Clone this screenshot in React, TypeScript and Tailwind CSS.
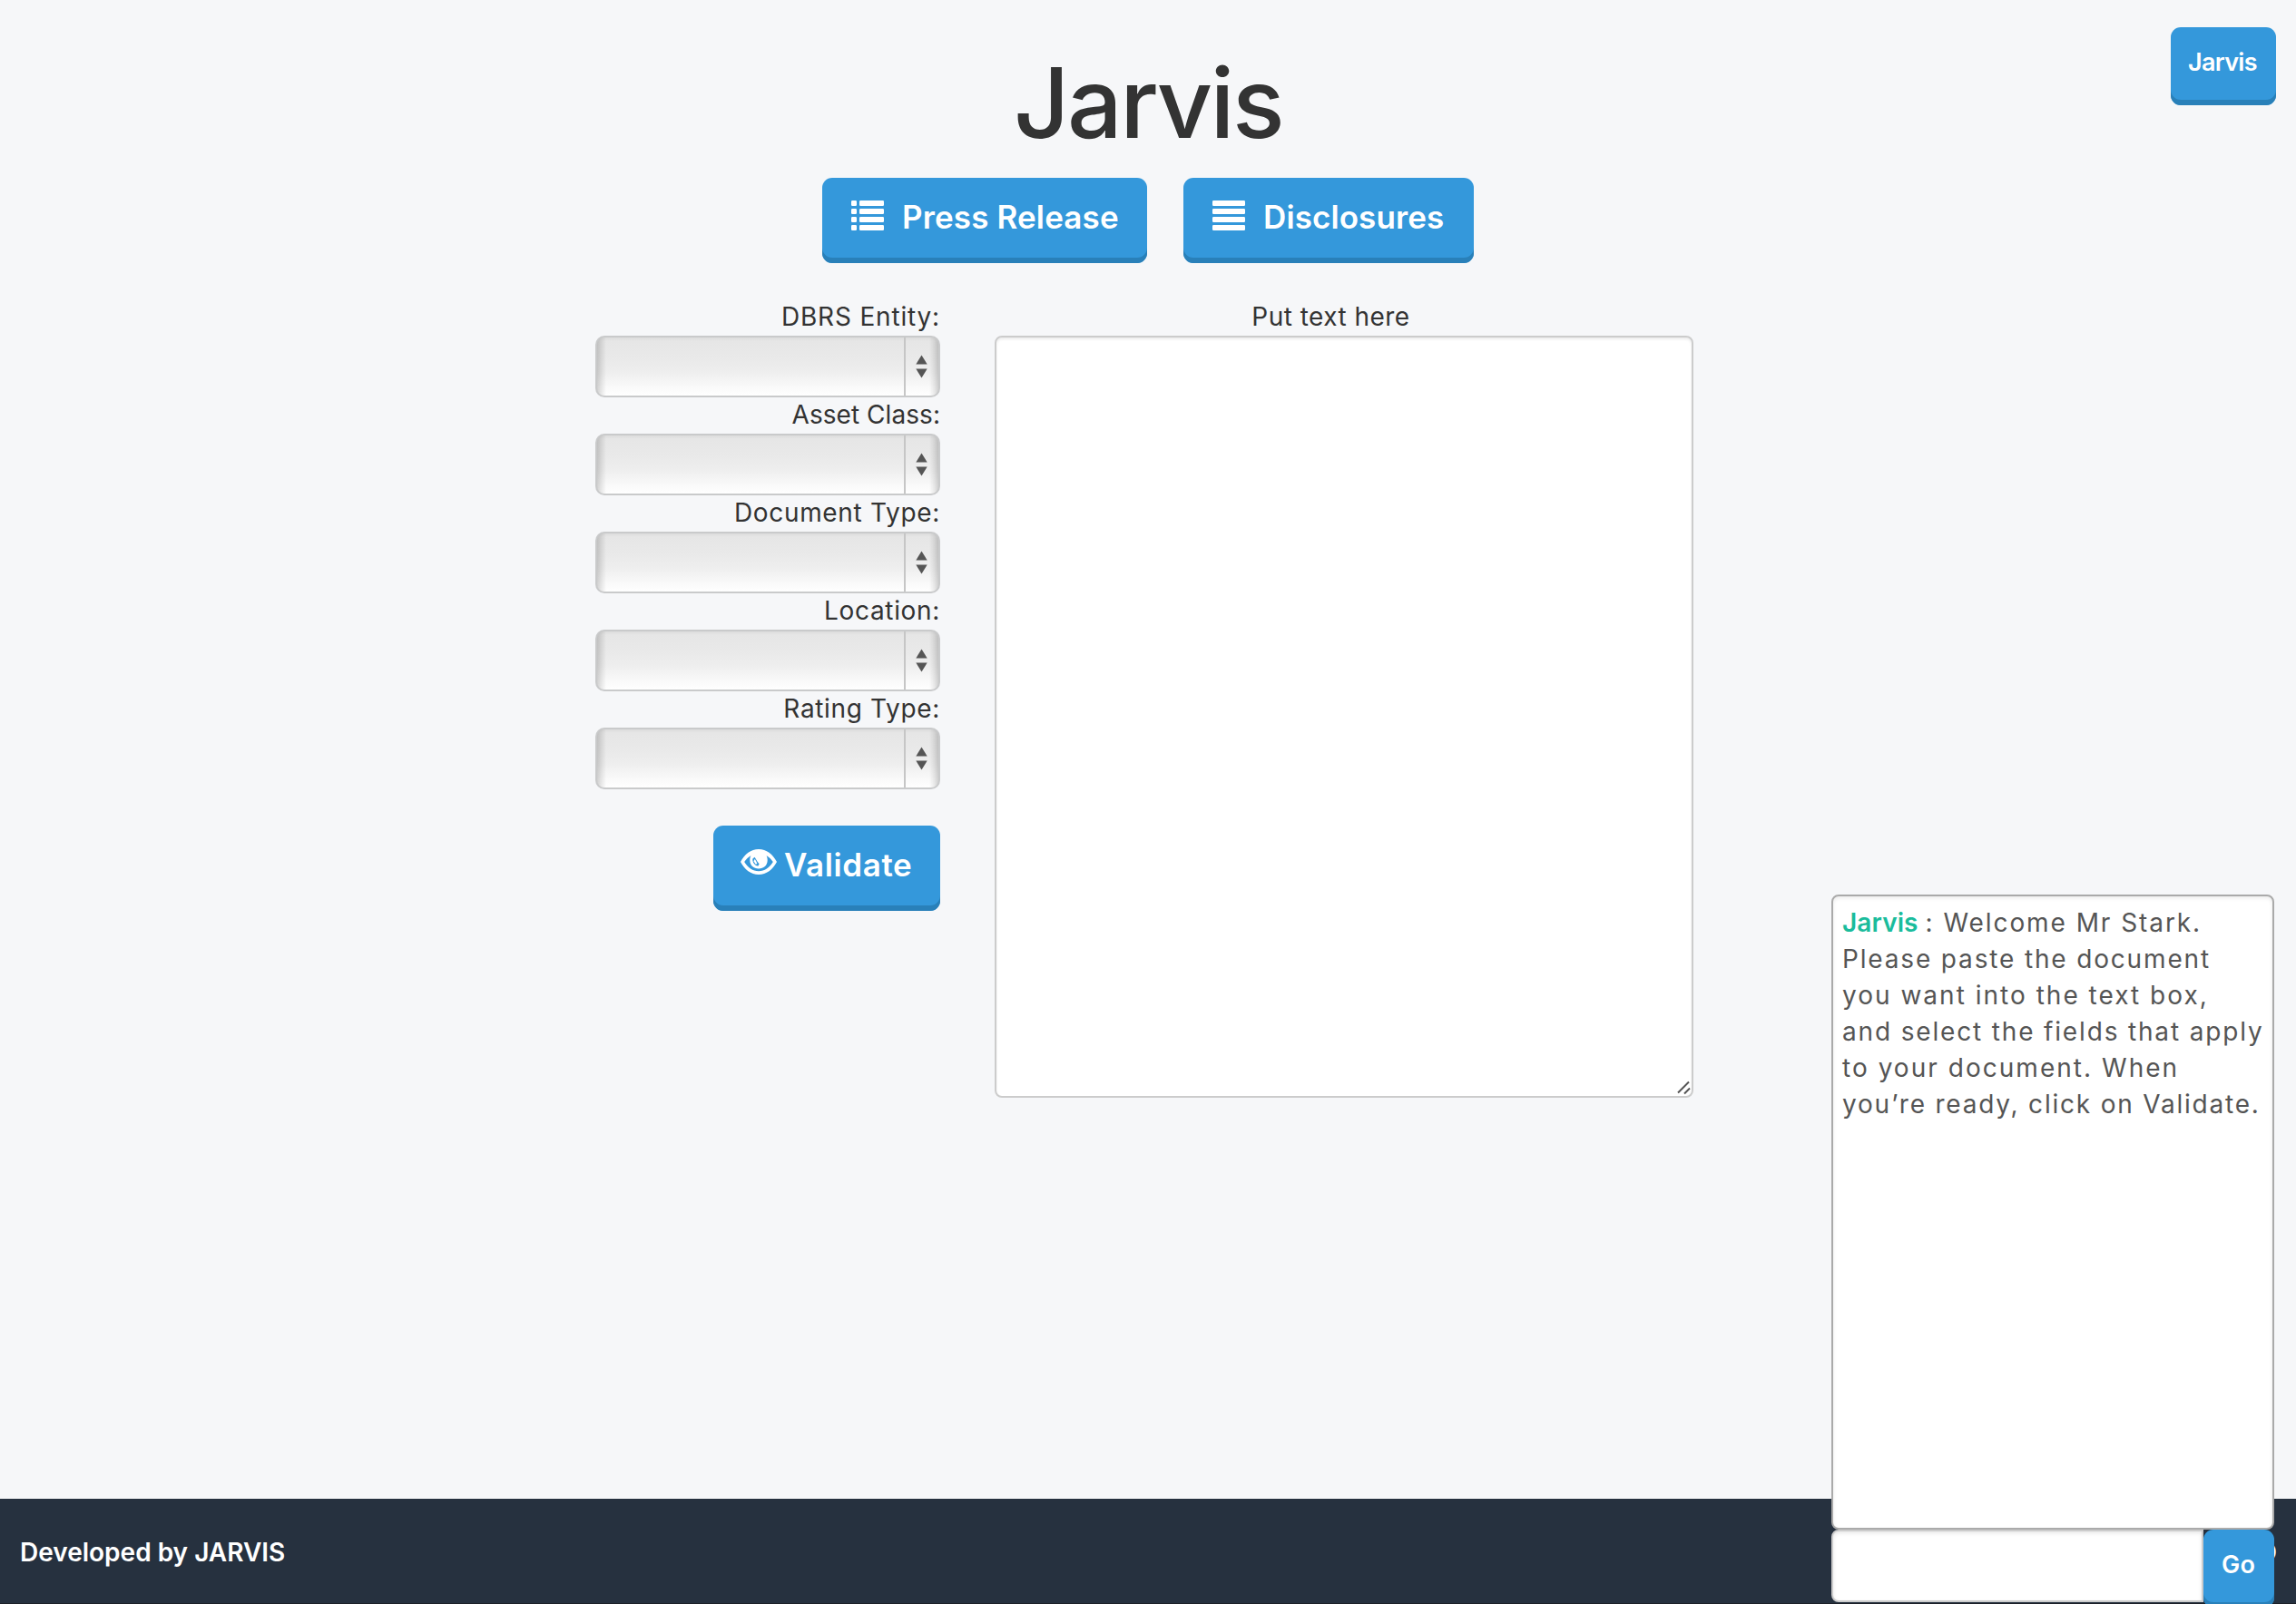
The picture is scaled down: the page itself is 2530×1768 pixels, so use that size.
import type { ReactNode } from 'react';

const blueButton =
  'flex shrink-0 items-start rounded-[11px] bg-[#3498db] font-semibold text-white shadow-[inset_0_-6px_0_#2980b9] whitespace-nowrap';

function LargeButton({ className, children }: { className: string; children: ReactNode }) {
  return (
    <button type="button" className={`${blueButton} h-[94px] text-[35px] leading-[86px] ${className}`}>
      {children}
    </button>
  );
}

function ListIcon() {
  return (
    <svg className="mt-[25px] shrink-0" width="36" height="33" viewBox="0 0 36 33" fill="currentColor">
      {[0, 9, 18, 27].map((y) => (
        <g key={y}>
          <rect x="0" y={y} width="6" height="6" rx="1.3" />
          <rect x="9" y={y} width="27" height="6" rx="1.3" />
        </g>
      ))}
    </svg>
  );
}

function JustifyIcon() {
  return (
    <svg className="mt-[25px] shrink-0" width="36" height="33" viewBox="0 0 36 33" fill="currentColor">
      {[0, 9, 18, 27].map((y) => (
        <rect key={y} x="0" y={y} width="36" height="6" rx="1.3" />
      ))}
    </svg>
  );
}

function EyeIcon() {
  return (
    <svg className="mt-[26px] shrink-0" width="40" height="28" viewBox="0 0 40 28">
      <path
        fill="currentColor"
        fillRule="evenodd"
        d="M20 0C11.500 0 4.500 5.500 0 14C4.500 22.500 11.500 28 20 28C28.500 28 35.500 22.500 40 14C35.500 5.500 28.500 0 20 0ZM11.500 7C10.600 8.700 10.300 10.200 10.300 12C10.300 18 14.500 21.500 20 21.500C25.500 21.500 29.700 18 29.700 12C29.700 10.200 29.400 8.700 28.500 7C31.500 8.800 33.800 11 35.800 14C32 20.500 26.500 24.300 20 24.300C13.500 24.300 8 20.500 4.200 14C6.200 11 8.500 8.800 11.500 7Z"
      />
      <path fill="currentColor" d="M20 2C25.500 2 29 6.500 29 11.500S25 20.500 20 20.500S11 16.500 11 11.500S14.500 2 20 2Z" />
      <path fill="#3498db" d="M15.600 8.800L13.400 10.400C12.800 14.200 15.600 18 19.400 18.600L20.600 16.200L18.600 13.800Z" />
      <path fill="currentColor" d="M15.800 10.800L18.300 15.400L17 17L14.400 13.200Z" />
    </svg>
  );
}

const fields = [
  { label: 'DBRS Entity:', tracking: 'tracking-[0.82px]' },
  { label: 'Asset Class:', tracking: 'tracking-[0.05px]' },
  { label: 'Document Type:', tracking: 'tracking-[0.68px]' },
  { label: 'Location:', tracking: 'tracking-[0.67px]' },
  { label: 'Rating Type:', tracking: 'tracking-[0.66px]' },
];

function SelectField({ label, tracking }: { label: string; tracking: string }) {
  return (
    <div className="flex flex-col">
      <label className={`h-10 text-right text-[28px] leading-[38px] ${tracking}`}>{label}</label>
      <div className="flex h-[68px] justify-end overflow-hidden rounded-[10px] border-2 border-[#c9cacb] bg-[linear-gradient(90deg,#0000002b_0,#00000014_5px,transparent_10px,transparent_366px,#00000012_371px,#0000002b_376px),linear-gradient(180deg,#dcdcdc_0,#e6e6e6_4px,#e9e9e9_22px,#eeeeee_38px,#f9f9f9_54px,#ffffff_64px)]">
        <div className="flex w-[38px] items-center justify-center border-l-2 border-[#c6c6c6] pr-px">
          <svg width="13" height="26" viewBox="0 0 13 26" fill="#555555">
            <path d="M6.500 0.500L12.700 10.500H0.300Z" />
            <path d="M0.300 15.500H12.700L6.500 25.500Z" />
          </svg>
        </div>
      </div>
    </div>
  );
}

const chatLines = [
  { text: 'Please paste the document', tracking: 'tracking-[1.84px]' },
  { text: 'you want into the text box,', tracking: 'tracking-[2.01px]' },
  { text: 'and select the fields that apply', tracking: 'tracking-[1.84px]' },
  { text: 'to your document. When', tracking: 'tracking-[2.03px]' },
  { text: 'you’re ready, click on Validate.', tracking: 'tracking-[1.79px]' },
];

function ChatWidget() {
  return (
    <aside className="absolute top-[986px] left-[2018px] flex w-[488px] flex-col">
      <div className="flex h-[700px] flex-col rounded-lg border-2 border-[#aaaaaa] bg-white px-[10px] pt-[9px] text-[28px] leading-10 whitespace-nowrap text-[#555555] shadow-[inset_0_2px_4px_#00000014]">
        <p>
          <span className="font-semibold tracking-[0.1px] text-[#1abc9c]">Jarvis</span>
          <span className="ml-2 tracking-[1.93px]">: Welcome Mr Stark.</span>
        </p>
        {chatLines.map((line) => (
          <p key={line.text} className={line.tracking}>
            {line.text}
          </p>
        ))}
      </div>
      <div className="flex">
        <input
          type="text"
          className="h-20 w-[410px] rounded-l-lg border-2 border-[#cccccc] bg-white shadow-[inset_0_2px_4px_#00000018]"
        />
        <button type="button" className={`${blueButton} h-[86px] w-[78px] pl-5 text-[27px] leading-[78px] tracking-[0.28px]`}>
          Go
        </button>
      </div>
    </aside>
  );
}

export default function App() {
  return (
    <div className="relative flex h-[1768px] w-[2530px] flex-col overflow-hidden bg-[#f6f7f9] font-['Inter',sans-serif] text-[#333333]">
      <h1 className="mt-[53px] mb-[23px] text-center text-[107px] leading-[120px] font-medium tracking-[-2.6px]">Jarvis</h1>

      <nav className="flex justify-center gap-10">
        <LargeButton className="w-[358px] gap-5 pl-8 tracking-[0.14px]">
          <ListIcon />
          Press Release
        </LargeButton>
        <LargeButton className="w-[320px] gap-5 pl-8 tracking-[0.1px]">
          <JustifyIcon />
          Disclosures
        </LargeButton>
      </nav>

      <main className="mt-10 ml-[656px] flex gap-[60px]">
        <section className="flex w-[380px] flex-col">
          {fields.map((field) => (
            <SelectField key={field.label} label={field.label} tracking={field.tracking} />
          ))}
          <LargeButton className="mt-10 w-[250px] gap-2 self-end pl-[30px] tracking-[0.59px]">
            <EyeIcon />
            Validate
          </LargeButton>
        </section>

        <section className="flex w-[770px] flex-col">
          <label className="h-10 pr-[29px] text-center text-[28px] leading-[38px] tracking-[0.47px]">Put text here</label>
          <div className="relative flex">
            <textarea className="h-[840px] w-full resize-none rounded-lg border-2 border-[#cccccc] bg-white shadow-[inset_0_2px_3px_#00000014]" />
            <svg className="absolute right-[3px] bottom-[3px]" width="16" height="16" viewBox="0 0 16 16" stroke="#555555" strokeWidth="2">
              <path d="M2 13.500L14 1.500M9 14.500L15 8.500" />
            </svg>
          </div>
        </section>
      </main>

      <footer className="mt-auto flex h-[116px] justify-between border-b border-[#1c2028] bg-[#26313f] pr-[21px] pl-[22px] text-[28px] leading-[118px] font-semibold text-white">
        <span>Developed by JARVIS</span>
        <span>O</span>
      </footer>

      <button
        type="button"
        className={`${blueButton} absolute top-[30px] left-[2392px] h-[86px] w-[116px] pl-[19px] text-[27px] leading-[78px] tracking-[-0.7px]`}
      >
        Jarvis
      </button>

      <ChatWidget />
    </div>
  );
}
